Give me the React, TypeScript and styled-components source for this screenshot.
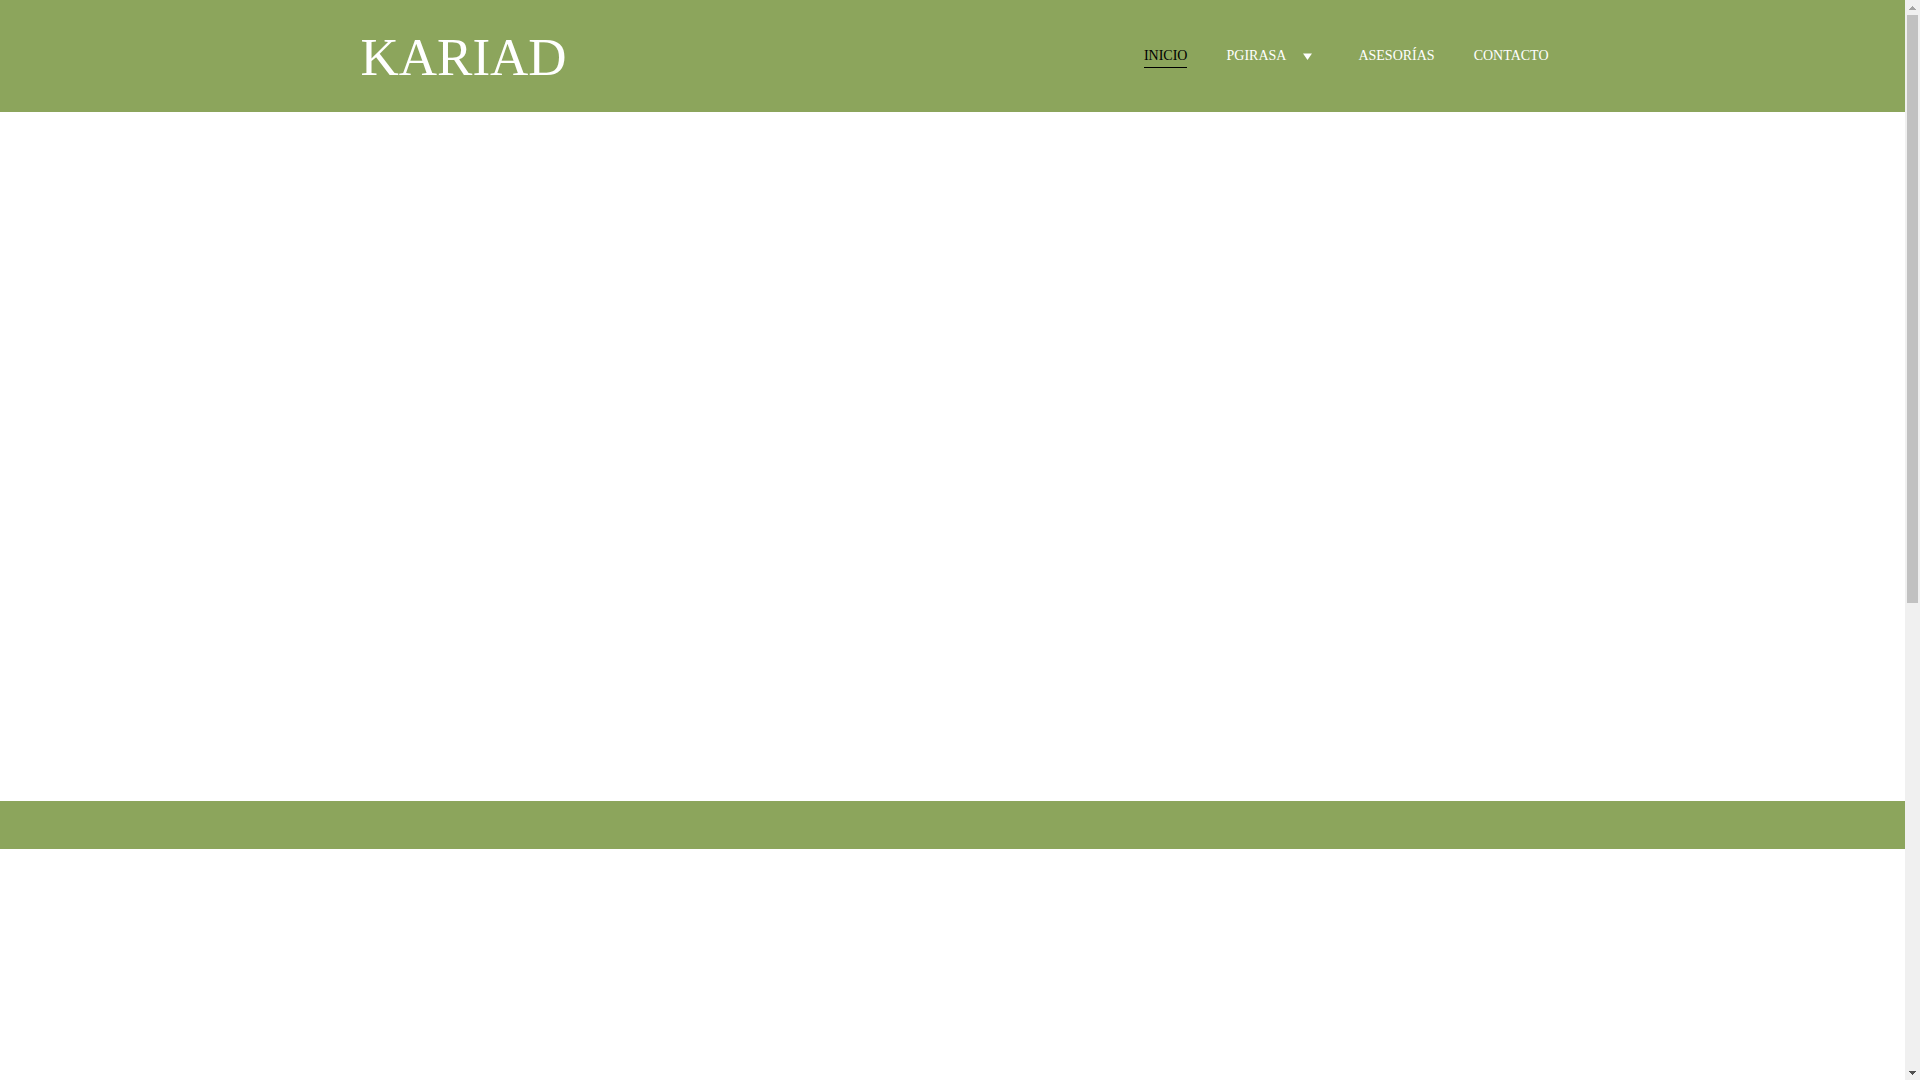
import React from "react";
import styled, { createGlobalStyle } from "styled-components";

const Global = createGlobalStyle`
  * { box-sizing: border-box; }
  html, body { margin: 0; background: #fff; overflow: hidden; }
`;

const Frame = styled.div`
  display: grid;
  grid-template-columns: minmax(0, 1fr) 15px;
  height: 100vh;
  overflow: hidden;
  font-family: "Liberation Serif", "Times New Roman", serif;
`;

const Page = styled.div`
  display: flex;
  flex-direction: column;
`;

const Header = styled.header`
  display: flex;
  justify-content: center;
  background: #8ca55c;
`;

const HeaderInner = styled.div`
  display: flex;
  align-items: center;
  justify-content: space-between;
  width: 100%;
  max-width: 1224px;
  min-height: 112px;
  padding: 0 16px;
`;

const Logo = styled.a`
  padding: 2px 4px 0;
  color: #fff;
  font-size: 53px;
  line-height: 60px;
  font-kerning: none;
  text-decoration: none;
`;

const Menu = styled.ul`
  display: flex;
  align-items: center;
  gap: 39px;
  margin: 0;
  padding: 0;
  list-style: none;
`;

const MenuItem = styled.li`
  display: flex;
  align-items: center;
  gap: 9px;
`;

const MenuLink = styled.a<{ $active?: boolean }>`
  padding: 3px 0;
  border-bottom: 1px solid ${(p) => (p.$active ? "#000" : "transparent")};
  color: ${(p) => (p.$active ? "#000" : "#fff")};
  font-size: 14px;
  line-height: 17px;
  text-decoration: none;
`;

const Toggle = styled.button`
  display: grid;
  place-items: center;
  width: 24px;
  height: 24px;
  padding: 0;
  border: 0;
  background: none;
  color: #fff;
`;

const Hero = styled.section`
  height: 689px;
`;

const Band = styled.section`
  height: 48px;
  background: #8ca55c;
`;

const Rail = styled.div`
  display: grid;
  grid-template-rows: 15px minmax(0, 1fr) 15px;
  background: #f0f0f0;
`;

const RailArrow = styled.div`
  display: grid;
  place-items: center;
`;

const Track = styled.div`
  display: flex;
  padding: 0 2px;
`;

const Thumb = styled.div`
  width: 100%;
  height: 56%;
  background: #c1c1c1;
`;

export default function App() {
  return (
    <Frame>
      <Global />
      <Page>
        <Header>
          <HeaderInner>
            <Logo href="#">KARIAD</Logo>
            <nav>
              <Menu>
                <MenuItem><MenuLink href="#" $active>INICIO</MenuLink></MenuItem>
                <MenuItem>
                  <MenuLink href="#pgirasa">PGIRASA</MenuLink>
                  <Toggle aria-label="PGIRASA">
                    <svg width="9" height="7" viewBox="0 0 9 7" aria-hidden="true">
                      <path d="M0 .5h9L4.500 7z" fill="currentColor" />
                    </svg>
                  </Toggle>
                </MenuItem>
                <MenuItem><MenuLink href="#asesorias">ASESORÍAS</MenuLink></MenuItem>
                <MenuItem><MenuLink href="#contacto">CONTACTO</MenuLink></MenuItem>
              </Menu>
            </nav>
          </HeaderInner>
        </Header>
        <main>
          <Hero />
          <Band />
        </main>
      </Page>
      <Rail aria-hidden="true">
        <RailArrow>
          <svg width="7" height="4" viewBox="0 0 7 4" shapeRendering="crispEdges">
            <path d="M3 0h1v1h1v1h1v1h1v1H0V3h1V2h1V1h1z" fill="#a3a3a3" />
          </svg>
        </RailArrow>
        <Track><Thumb /></Track>
        <RailArrow>
          <svg width="7" height="4" viewBox="0 0 7 4" shapeRendering="crispEdges">
            <path d="M0 0h7v1H6v1H5v1H4v1H3V3H2V2H1V1H0z" fill="#505050" />
          </svg>
        </RailArrow>
      </Rail>
    </Frame>
  );
}
